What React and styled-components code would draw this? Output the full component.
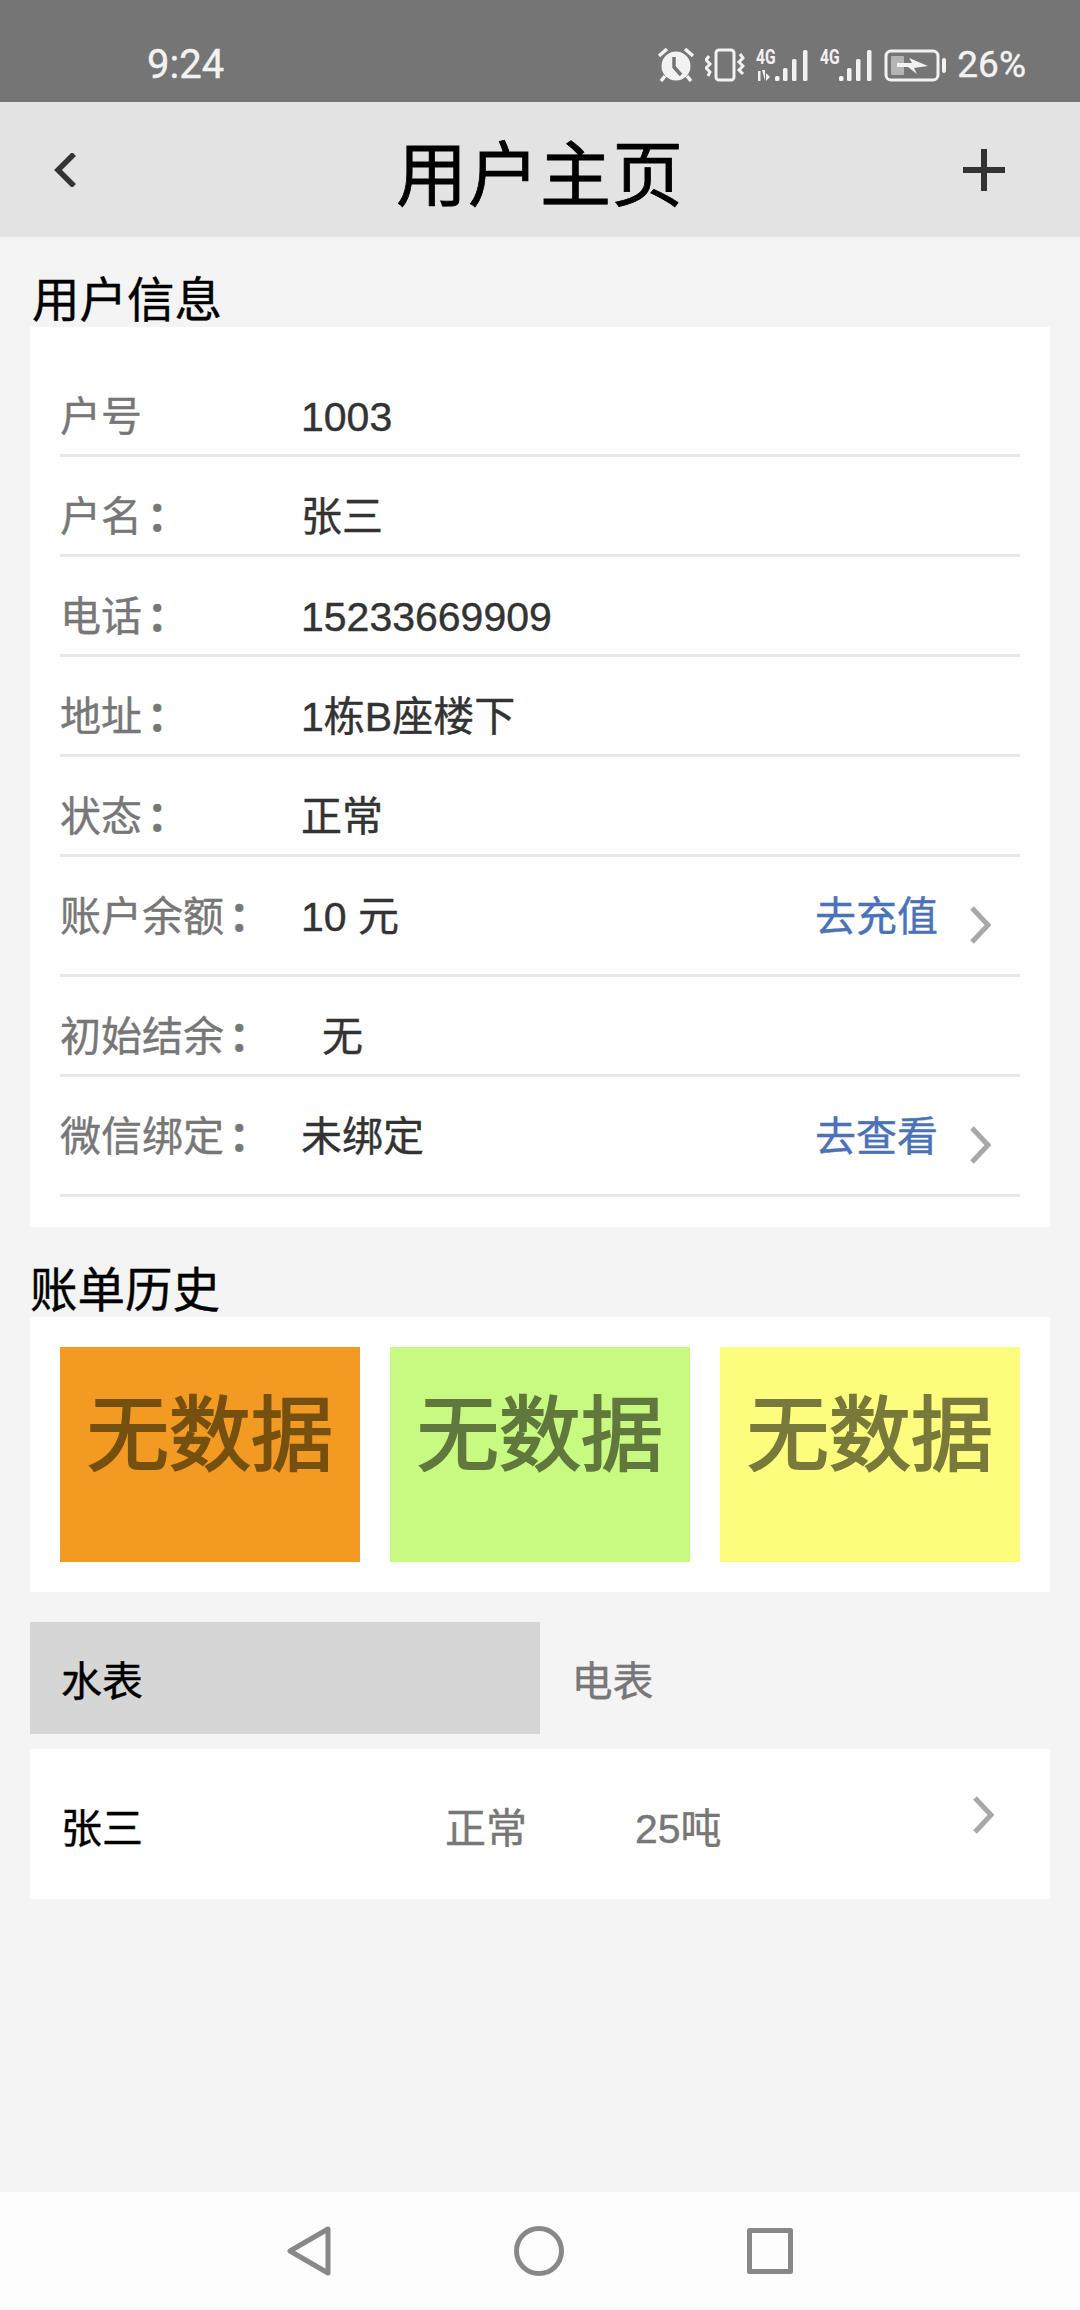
import React from 'react'
import styled, { createGlobalStyle } from 'styled-components'

const Global = createGlobalStyle`
  * { box-sizing: border-box; }
  html, body { margin: 0; padding: 0; }
  body {
    background: #f4f4f4;
    font-family: "Liberation Sans", "Noto Sans CJK SC", sans-serif;
    -webkit-text-stroke: 0.4px currentColor;
  }
`

const Page = styled.div`
  min-height: 100vh;
  display: flex;
  flex-direction: column;
`

const StatusBar = styled.div`
  height: 102px;
  background: #757575;
  color: #f2f2f2;
  display: flex;
  justify-content: space-between;
  align-items: flex-end;
  padding: 0 54px 20px 147px;
`

const Time = styled.div`
  font-family: Roboto, sans-serif;
  font-size: 40px;
  line-height: 40px;
  margin-bottom: -3px;
`

const StatusIcons = styled.div`
  display: flex;
  align-items: flex-end;
  gap: 11px;
`

const Percent = styled.div`
  font-family: Roboto, sans-serif;
  font-size: 37px;
  line-height: 38px;
  margin-bottom: -2px;
`

const Header = styled.div`
  height: 135px;
  background: #e3e3e3;
  display: grid;
  grid-template-columns: 1fr auto 1fr;
  align-items: center;
  padding: 0 54px;
`

const HeaderTitle = styled.div`
  font-size: 71px;
  line-height: 80px;
  color: #000;
  letter-spacing: 1px;
  margin-top: 12px;
  -webkit-text-stroke: 0.8px currentColor;
`

const HeaderPlus = styled.svg`
  justify-self: end;
  margin-right: 21px;
`

const Main = styled.div`
  padding: 0 30px;
`

const SectionTitle = styled.div`
  height: 90px;
  padding: 41px 0 0 ${p => p.$indent || 0}px;
  font-size: 47.5px;
  line-height: 46px;
  color: #000;
`

const Card = styled.div`
  background: #fff;
  padding: 30px;
`

const Row = styled.div`
  height: ${p => (p.$tall ? 120 : 100)}px;
  border-bottom: 3px solid #e8e8e8;
  display: flex;
  align-items: flex-start;
  padding-top: 36px;
  font-size: 41px;
  line-height: 48px;
`

const Label = styled.div`
  width: 241px;
  color: #777;
`

const Colon = styled.span`
  font-weight: 700;
  margin-left: 5px;
`

const Value = styled.div`
  flex: 1;
  color: #333;
  padding-left: ${p => p.$indent || 0}px;
`

const Action = styled.div`
  display: flex;
  align-items: flex-start;
  gap: 30px;
  padding-right: 28px;
  color: #4a72b8;
`

const Chevron = styled.svg`
  display: block;
  margin-top: ${p => p.$top || 0}px;
`

const Tiles = styled.div`
  display: grid;
  grid-template-columns: repeat(3, 1fr);
  gap: 30px;
`

const Tile = styled.div`
  height: 215px;
  background: ${p => p.$color};
  color: ${p => p.$ink};
  font-size: 82px;
  -webkit-text-stroke: 2px currentColor;
  display: flex;
  align-items: center;
  justify-content: center;
  padding-bottom: 52px;
`

const Tabs = styled.div`
  display: flex;
  margin-top: 30px;
`

const Tab = styled.div`
  flex: 1;
  height: 112px;
  display: flex;
  align-items: center;
  padding-left: ${p => (p.$active ? 31 : 32)}px;
  font-size: 41px;
  background: ${p => (p.$active ? '#d6d6d6' : 'transparent')};
  color: ${p => (p.$active ? '#000' : '#777')};
`

const MeterRow = styled.div`
  margin-top: 15px;
  height: 150px;
  background: #fff;
  display: grid;
  grid-template-columns: 384px 190px 1fr auto;
  align-items: center;
  padding: 2px 55px 0 31px;
  font-size: 41px;
  color: #777;
`

const MeterName = styled.div`
  color: #000;
`

const NavBar = styled.div`
  margin-top: auto;
  height: 118px;
  background: #fdfdfd;
  display: flex;
  justify-content: center;
  gap: 183px;
  padding-top: 34px;
`

const Signal = ({ data }) => (
  <svg width="53" height="40" viewBox="0 -7 53 40" fill="#f2f2f2">
    <text x="0" y="15" transform="scale(0.78 1)" fontSize="20" fontWeight="700" fontFamily="Roboto, sans-serif">4G</text>
    {data && (
      <>
        <rect x="2" y="22" width="2.5" height="10" />
        <path d="M6 21 L9 21 L9 32 Z M10 32 L10 24 L14 28 Z" />
      </>
    )}
    <rect x="19" y="27" width="4.5" height="5" rx="1.5" />
    <rect x="27" y="19" width="4.5" height="13" rx="1.5" />
    <rect x="36" y="10" width="4.5" height="22" rx="1.5" />
    <rect x="47" y="1" width="4.5" height="31" rx="1.5" />
  </svg>
)

const SideChevron = ({ top }) => (
  <Chevron $top={top} width="24" height="38" viewBox="0 0 24 38" fill="none" stroke="#a8a8a8" strokeWidth="5">
    <path d="M4 2 L20 19 L4 36" />
  </Chevron>
)

export default function App() {
  return (
    <Page>
      <Global />
      <StatusBar>
        <Time>9:24</Time>
        <StatusIcons>
          <svg width="36" height="34" viewBox="0 0 36 34" fill="#f2f2f2">
            <path d="M1 8 L9 1 M35 8 L27 1" stroke="#f2f2f2" strokeWidth="3.5" />
            <path d="M7 28 L3 33 M29 28 L33 33" stroke="#f2f2f2" strokeWidth="3.5" />
            <circle cx="18" cy="18" r="14.5" />
            <path d="M16 9 L16 19 L23 27" stroke="#757575" strokeWidth="3.5" fill="none" />
          </svg>
          <svg width="40" height="34" viewBox="0 0 40 34" fill="none" stroke="#f2f2f2" strokeWidth="3">
            <rect x="11" y="2" width="18" height="30" rx="3" />
            <path d="M4 8 L1 12 L5 16 L1 20 L5 24 L3 28" />
            <path d="M35 6 L38 10 L34 14 L38 18 L34 22 L38 26" />
          </svg>
          <Signal data />
          <Signal />
          <svg width="62" height="33" viewBox="0 0 62 33">
            <rect x="2" y="2" width="52" height="29" rx="5" fill="none" stroke="#f2f2f2" strokeWidth="3" />
            <rect x="7" y="7" width="13" height="19" rx="1" fill="#b5b5b5" />
            <path d="M13 14 L28 14 L25 9 L44 17 L30 19 L33 25 L24 18 L13 18 Z" fill="#f2f2f2" />
            <rect x="58" y="9" width="4" height="15" rx="2" fill="#f2f2f2" />
          </svg>
          <Percent>26%</Percent>
        </StatusIcons>
      </StatusBar>

      <Header>
        <svg width="22" height="34" viewBox="0 0 22 34" fill="none" stroke="#333" strokeWidth="5.5">
          <path d="M20 1 L4 17 L20 33" />
        </svg>
        <HeaderTitle>用户主页</HeaderTitle>
        <HeaderPlus width="42" height="42" viewBox="0 0 42 42" fill="none" stroke="#333" strokeWidth="6">
          <path d="M21 0 V42 M0 21 H42" />
        </HeaderPlus>
      </Header>

      <Main>
        <SectionTitle $indent={2}>用户信息</SectionTitle>
        <Card>
          <Row><Label>户号</Label><Value>1003</Value></Row>
          <Row><Label>户名<Colon>：</Colon></Label><Value>张三</Value></Row>
          <Row><Label>电话<Colon>：</Colon></Label><Value>15233669909</Value></Row>
          <Row><Label>地址<Colon>：</Colon></Label><Value>1栋B座楼下</Value></Row>
          <Row><Label>状态<Colon>：</Colon></Label><Value>正常</Value></Row>
          <Row $tall>
            <Label>账户余额<Colon>：</Colon></Label>
            <Value>10 元</Value>
            <Action>去充值<SideChevron top={13} /></Action>
          </Row>
          <Row><Label>初始结余<Colon>：</Colon></Label><Value $indent={21}>无</Value></Row>
          <Row $tall>
            <Label>微信绑定<Colon>：</Colon></Label>
            <Value>未绑定</Value>
            <Action>去查看<SideChevron top={13} /></Action>
          </Row>
        </Card>

        <SectionTitle>账单历史</SectionTitle>
        <Card>
          <Tiles>
            <Tile $color="#f39a22" $ink="#75500e">无数据</Tile>
            <Tile $color="#c8fa82" $ink="#60783e">无数据</Tile>
            <Tile $color="#fdfd7d" $ink="#79793c">无数据</Tile>
          </Tiles>
        </Card>

        <Tabs>
          <Tab $active>水表</Tab>
          <Tab>电表</Tab>
        </Tabs>

        <MeterRow>
          <MeterName>张三</MeterName>
          <div>正常</div>
          <div>25吨</div>
          <SideChevron top={-20} />
        </MeterRow>
      </Main>

      <NavBar>
        <svg width="44" height="50" viewBox="0 0 44 50" fill="none" stroke="#888" strokeWidth="5" strokeLinejoin="round">
          <path d="M41 3 V47 L3 25 Z" />
        </svg>
        <svg width="50" height="50" viewBox="0 0 50 50" fill="none" stroke="#888" strokeWidth="5">
          <circle cx="25" cy="25" r="22.5" />
        </svg>
        <svg width="46" height="50" viewBox="0 0 46 50" fill="none" stroke="#888" strokeWidth="5" strokeLinejoin="round">
          <rect x="2.5" y="4.5" width="41" height="41" />
        </svg>
      </NavBar>
    </Page>
  )
}
